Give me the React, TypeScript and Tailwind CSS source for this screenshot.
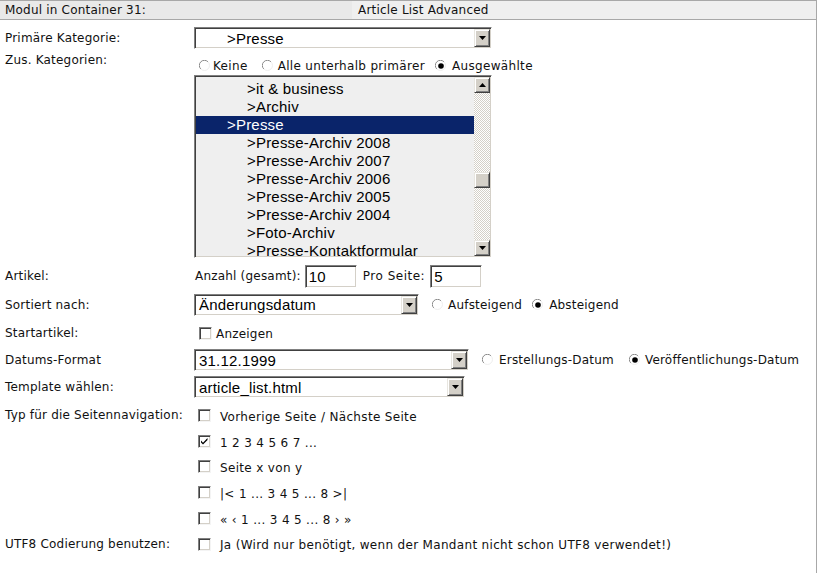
import React from "react";

const labelFont = "font-['DejaVu_Sans',Verdana,sans-serif] text-[12px] tracking-[0.2px] text-[#111]";
const listFont = "font-['Liberation_Sans',Arial,sans-serif] text-[15px] text-black";

function Arrow({ up }: { up?: boolean }) {
  return (
    <span className="flex w-[16px] items-center justify-center border border-t-[#e8e6e0] border-l-[#e8e6e0] border-b-[#404040] border-r-[#404040] bg-[#d4d0c8] shadow-[inset_1px_1px_0_#fff,inset_-1px_-1px_0_#808080]">
      <svg width="7" height="4" viewBox="0 0 7 4">
        {up ? <path d="M0 4h7L3.5 0z" fill="#000" /> : <path d="M0 0h7L3.5 4z" fill="#000" />}
      </svg>
    </span>
  );
}

function Select({ width, value, indent }: { width: string; value: string; indent?: string }) {
  return (
    <div
      className={`flex h-[22px] ${width} border border-t-[#808080] border-l-[#808080] border-b-white border-r-white bg-white p-px shadow-[inset_1px_1px_0_#404040,inset_-1px_-1px_0_#d4d0c8]`}
    >
      <span className={`flex flex-1 items-center ${indent ?? "pl-[3px]"} ${listFont} leading-none`}>{value}</span>
      <Arrow />
    </div>
  );
}

function TextInput({ value }: { value: string }) {
  return (
    <div className="flex h-[23px] w-[52px] items-center border border-t-[#808080] border-l-[#808080] border-b-white border-r-white bg-white pl-[3px] shadow-[inset_1px_1px_0_#404040,inset_-1px_-1px_0_#d4d0c8]">
      <span className={`${listFont} leading-none`}>{value}</span>
    </div>
  );
}

function Radio({ checked }: { checked?: boolean }) {
  return (
    <svg width="12" height="12" viewBox="0 0 12 12" className="shrink-0">
      <circle cx="6" cy="6" r="5" fill="#fff" />
      <path d="M1.8 9 A5 5 0 0 1 9 1.8" fill="none" stroke="#8a8a8a" strokeWidth="1" />
      <path d="M9 1.8 A5 5 0 0 1 1.8 9" fill="none" stroke="#eeeeee" strokeWidth="1" />
      {checked && <circle cx="6" cy="6" r="2.8" fill="#000" />}
    </svg>
  );
}

function Check({ checked }: { checked?: boolean }) {
  return (
    <span className="flex h-[13px] w-[13px] shrink-0 items-center justify-center border border-t-[#808080] border-l-[#808080] border-b-[#f4f4f4] border-r-[#f4f4f4] bg-white shadow-[inset_1px_1px_0_#404040,inset_-1px_-1px_0_#d4d0c8]">
      {checked && (
        <svg width="9" height="9" viewBox="0 0 9 9">
          <path d="M1 3.5l2 2.2L7.5 1v2L3 7.5 1 5.5z" fill="#000" />
        </svg>
      )}
    </span>
  );
}

const listItems = [
  { text: ">Aktuell", sub: true },
  { text: ">it & business", sub: true },
  { text: ">Archiv", sub: true },
  { text: ">Presse", sub: false, selected: true },
  { text: ">Presse-Archiv 2008", sub: true },
  { text: ">Presse-Archiv 2007", sub: true },
  { text: ">Presse-Archiv 2006", sub: true },
  { text: ">Presse-Archiv 2005", sub: true },
  { text: ">Presse-Archiv 2004", sub: true },
  { text: ">Foto-Archiv", sub: true },
  { text: ">Presse-Kontaktformular", sub: true },
];

const navTypes = [
  { text: "Vorherige Seite / Nächste Seite", h: "h-[28px]" },
  { text: "1 2 3 4 5 6 7 ...", h: "h-[24px]", checked: true },
  { text: "Seite x von y", h: "h-[26px]" },
  { text: "|< 1 ... 3 4 5 ... 8 >|", h: "h-[26px]" },
  { text: "« ‹ 1 ... 3 4 5 ... 8 › »", h: "h-[26px]" },
];

export default function App() {
  return (
    <div className={`h-[573px] w-[817px] border-t border-r border-[#a8a8a8] bg-white ${labelFont}`}>
      {/* Kopfzeile */}
      <div className="flex h-[19px] border-b border-[#a8a8a8]">
        <div className="flex w-[352px] items-center bg-[#e9e9e9] pl-[5px]">Modul in Container 31:</div>
        <div className="flex flex-1 items-center bg-[#efefef] pl-[6px]">Article List Advanced</div>
      </div>

      {/* Primäre Kategorie */}
      <div className="flex h-[31px]">
        <div className="w-[194px] pl-[5px] pt-[11px] leading-[14px]">Primäre Kategorie:</div>
        <div className="pt-[7px]">
          <Select width="w-[298px]" value=">Presse" indent="pl-[31px]" />
        </div>
      </div>

      {/* Zusätzliche Kategorien */}
      <div className="flex">
        <div className="w-[194px] pl-[5px] pt-[2px] leading-[14px]">Zus. Kategorien:</div>
        <div className="pb-[4px]">
          <div className="mt-[8px] flex h-[14px] items-center pl-[5px] leading-[14px] tracking-[0.33px]">
            <Radio />
            <span className="ml-[2px]">Keine</span>
            <span className="ml-[14px]">
              <Radio />
            </span>
            <span className="ml-[4px]">Alle unterhalb primärer</span>
            <span className="ml-[10px]">
              <Radio checked />
            </span>
            <span className="ml-[5px]">Ausgewählte</span>
          </div>
          <div className="mt-[2px] flex h-[183px] w-[298px] border border-t-[#808080] border-l-[#808080] border-b-white border-r-white bg-[#efefef] p-px shadow-[inset_1px_1px_0_#404040,inset_-1px_-1px_0_#d4d0c8]">
            <div className="flex-1 overflow-hidden">
              <div className="-mt-[15px]">
                {listItems.map((item) => (
                  <div
                    key={item.text}
                    className={`flex h-[18px] items-center ${listFont} ${item.sub ? "pl-[51px]" : "pl-[31px]"} ${
                      item.selected ? "bg-[#0a246a] !text-white" : ""
                    }`}
                  >
                    {item.text}
                  </div>
                ))}
              </div>
            </div>
            <div className="flex w-[16px] flex-col bg-[repeating-conic-gradient(#d4d0c8_0_25%,#ffffff_0_50%)] bg-[length:2px_2px]">
              <div className="flex h-[16px]">
                <Arrow up />
              </div>
              <div className="mt-[79px] flex h-[16px]">
                <span className="w-[16px] border border-t-[#e8e6e0] border-l-[#e8e6e0] border-b-[#404040] border-r-[#404040] bg-[#d4d0c8] shadow-[inset_1px_1px_0_#fff,inset_-1px_-1px_0_#808080]" />
              </div>
              <div className="flex-1" />
              <div className="flex h-[16px]">
                <Arrow />
              </div>
            </div>
          </div>
        </div>
      </div>

      {/* Artikel */}
      <div className="flex h-[28px] items-center">
        <div className="w-[195px] pl-[5px]">Artikel:</div>
        <span>Anzahl (gesamt):</span>
        <span className="ml-[4px]">
          <TextInput value="10" />
        </span>
        <span className="ml-[6px] tracking-[0.5px]">Pro Seite:</span>
        <span className="ml-[5px]">
          <TextInput value="5" />
        </span>
      </div>

      {/* Sortierung */}
      <div className="flex h-[29px] items-center">
        <div className="w-[194px] pl-[5px]">Sortiert nach:</div>
        <Select width="w-[225px]" value="Änderungsdatum" />
        <span className="ml-[13px]">
          <Radio />
        </span>
        <span className="ml-[4px]">Aufsteigend</span>
        <span className="ml-[10px]">
          <Radio checked />
        </span>
        <span className="ml-[5px]">Absteigend</span>
      </div>

      {/* Startartikel */}
      <div className="flex h-[28px] items-center">
        <div className="w-[199px] pl-[5px]">Startartikel:</div>
        <Check />
        <span className="ml-[4px] mt-[2px]">Anzeigen</span>
      </div>

      {/* Datumsformat */}
      <div className="flex h-[26px] items-center">
        <div className="w-[194px] pl-[5px]">Datums-Format</div>
        <Select width="w-[275px]" value="31.12.1999" />
        <span className="ml-[13px]">
          <Radio />
        </span>
        <span className="ml-[5px]">Erstellungs-Datum</span>
        <span className="ml-[15px]">
          <Radio checked />
        </span>
        <span className="ml-[4px]">Veröffentlichungs-Datum</span>
      </div>

      {/* Template */}
      <div className="flex h-[28px] items-center">
        <div className="w-[194px] pl-[5px]">Template wählen:</div>
        <Select width="w-[271px]" value="article_list.html" />
      </div>

      {/* Seitennavigation */}
      <div className="flex">
        <div className="w-[198px] pl-[5px] pt-[7px] leading-[14px]">Typ für die Seitennavigation:</div>
        <div className="flex flex-col">
          {navTypes.map((t) => (
            <div key={t.text} className={`flex ${t.h} items-center`}>
              <Check checked={t.checked} />
              <span className="ml-[9px] mt-[3px] tracking-[0.33px]">{t.text}</span>
            </div>
          ))}
        </div>
      </div>

      {/* UTF8 */}
      <div className="flex h-[26px] items-center">
        <div className="w-[198px] pl-[5px]">UTF8 Codierung benutzen:</div>
        <Check />
        <span className="ml-[9px] mt-[1px] tracking-[0.32px]">
          Ja (Wird nur benötigt, wenn der Mandant nicht schon UTF8 verwendet!)
        </span>
      </div>
    </div>
  );
}
